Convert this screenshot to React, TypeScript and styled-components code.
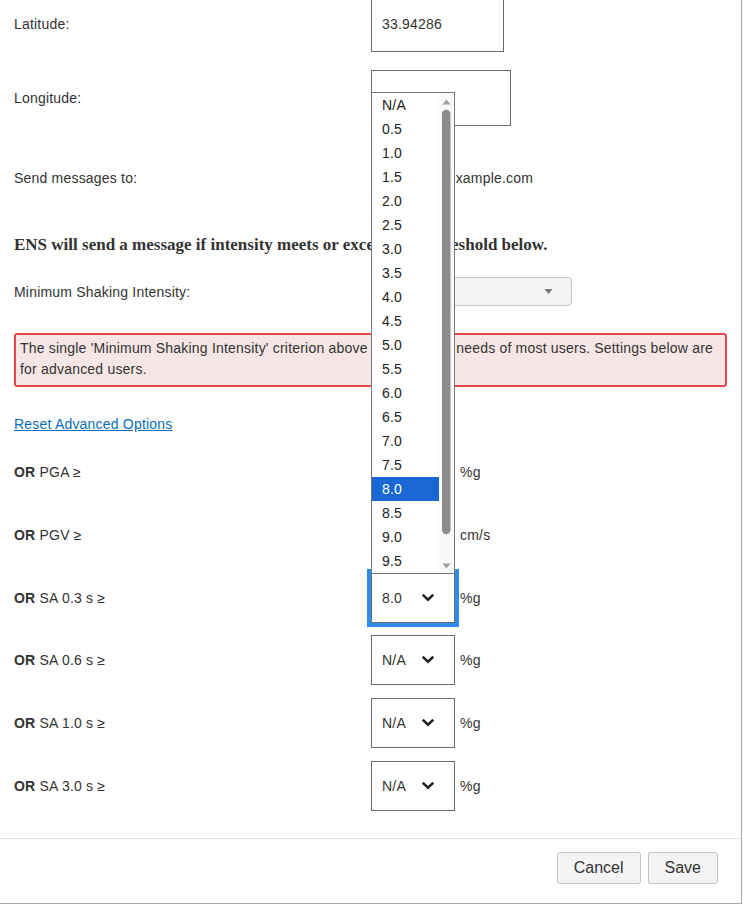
import React from "react";
import styled, { createGlobalStyle, css } from "styled-components";

const GlobalStyle = createGlobalStyle`
  html, body {
    margin: 0;
    padding: 0;
    background: #fff;
    overflow: hidden;
  }
  body {
    font-family: "Liberation Sans", Arial, sans-serif;
    font-size: 14px;
    letter-spacing: 0.2px;
    color: #333;
  }
`;

const Modal = styled.div`
  box-sizing: border-box;
  width: 742px;
  margin-top: -4px;
  background: #fff;
  border-right: 1px solid #a8a8a8;
  border-bottom: 1px solid #a8a8a8;
`;

const Body = styled.div`
  padding: 0 14px;
`;

const Row = styled.div<{ $top?: number; $height?: number }>`
  display: flex;
  align-items: center;
  min-height: ${(p) => p.$height ?? 20}px;
  margin-top: ${(p) => p.$top ?? 0}px;
  line-height: 20px;
`;

const Label = styled.div`
  width: 357px;
  flex-shrink: 0;
`;

const TextField = styled.div<{ $width: number }>`
  box-sizing: border-box;
  width: ${(p) => p.$width}px;
  height: 56px;
  border: 1px solid #6b6b6b;
  padding: 0 10px;
  display: flex;
  align-items: center;
`;

const PlainValue = styled.div`
  padding-left: 11px;
`;

const Heading = styled.h4`
  margin: 29px 0 0;
  font-family: "Liberation Serif", "Times New Roman", serif;
  font-size: 17px;
  font-weight: bold;
  letter-spacing: 0;
  line-height: 20px;
  color: #333;
`;

const ChosenSelect = styled.div`
  box-sizing: border-box;
  width: 201px;
  height: 29px;
  border: 1px solid #c6c6c6;
  border-radius: 4px;
  background: #f4f4f4;
  display: flex;
  align-items: center;
  justify-content: flex-end;
  padding-right: 18px;
`;

const Alert = styled.div`
  margin-top: 27px;
  border: 2px solid #e8474a;
  border-radius: 3px;
  background: #f7e6e6;
  padding: 3px 4px 5px;
  line-height: 21px;
`;

const ResetLink = styled.a`
  display: block;
  margin-top: 27px;
  line-height: 20px;
  color: #0a6ebd;
  text-decoration: underline;
  width: max-content;
`;

const Thresholds = styled.div`
  margin-top: 13px;
  display: flex;
  flex-direction: column;
  gap: 12.75px;
`;

const ThresholdRow = styled.div`
  display: flex;
  align-items: center;
  height: 50px;
  line-height: 20px;
`;

const SelectBox = styled.div<{ $focused?: boolean }>`
  position: relative;
  box-sizing: border-box;
  width: 84px;
  height: 50px;
  border: 1px solid #6b6b6b;
  display: flex;
  align-items: center;
  padding-left: 10px;
  ${(p) =>
    p.$focused &&
    css`
      outline: 4px solid #2d8cf0;
    `}
`;

const SelectValue = styled.span`
  width: 40px;
`;

const Unit = styled.span`
  margin-left: 5px;
`;

const OptionList = styled.div`
  position: absolute;
  left: -1px;
  bottom: 100%;
  box-sizing: border-box;
  width: 84px;
  border: 1px solid #767676;
  background: #fff;
  display: flex;
  z-index: 2;
`;

const Options = styled.div`
  flex: 1;
`;

const Option = styled.div<{ $selected?: boolean }>`
  height: 24px;
  line-height: 24px;
  padding-left: 10px;
  color: #222;
  ${(p) =>
    p.$selected &&
    css`
      background: #1967d2;
      color: #fff;
    `}
`;

const Footer = styled.div`
  margin-top: 27.25px;
  border-top: 1px solid #e3e3e3;
  display: flex;
  justify-content: flex-end;
  gap: 7px;
  padding: 13px 23px 19px 0;
`;

const Button = styled.button`
  box-sizing: border-box;
  height: 32px;
  padding: 0 16px;
  border: 1px solid #c4c4c4;
  border-radius: 3px;
  background: #f4f4f4;
  font-family: "Liberation Sans", Arial, sans-serif;
  font-size: 16px;
  color: #333;
`;

const Chevron = () => (
  <svg width="12" height="8" viewBox="0 0 12 8">
    <polyline
      points="1.6,1.6 6,5.8 10.4,1.6"
      fill="none"
      stroke="#222"
      strokeWidth="2.6"
      strokeLinecap="square"
    />
  </svg>
);

const Caret = () => (
  <svg width="9" height="5" viewBox="0 0 9 5">
    <polygon points="0.5,0 8.5,0 4.5,5" fill="#777" />
  </svg>
);

const ScrollTrack = () => (
  <svg width="15" height="480" viewBox="0 0 15 480">
    <rect x="0" y="0" width="15" height="480" fill="#f9f9f9" />
    <polygon points="3.5,11.5 7.5,6.5 11.5,11.5" fill="#a0a0a0" />
    <rect x="3" y="16.8" width="8.5" height="424.4" rx="4.2" fill="#8c8c8c" />
    <polygon points="3.5,470.5 11.5,470.5 7.5,475.5" fill="#a0a0a0" />
  </svg>
);

const VALUES = [
  "N/A", "0.5", "1.0", "1.5", "2.0", "2.5", "3.0", "3.5", "4.0", "4.5",
  "5.0", "5.5", "6.0", "6.5", "7.0", "7.5", "8.0", "8.5", "9.0", "9.5",
];

type Threshold = { name: string; unit: string; value: string; open?: boolean };

const THRESHOLDS: Threshold[] = [
  { name: "PGA", unit: "%g", value: "N/A" },
  { name: "PGV", unit: "cm/s", value: "N/A" },
  { name: "SA 0.3 s", unit: "%g", value: "8.0", open: true },
  { name: "SA 0.6 s", unit: "%g", value: "N/A" },
  { name: "SA 1.0 s", unit: "%g", value: "N/A" },
  { name: "SA 3.0 s", unit: "%g", value: "N/A" },
];

export default function App() {
  return (
    <>
      <GlobalStyle />
      <Modal>
        <Body>
          <Row $height={56}>
            <Label>Latitude:</Label>
            <TextField $width={133}>33.94286</TextField>
          </Row>
          <Row $top={18} $height={56}>
            <Label>Longitude:</Label>
            <TextField $width={140} />
          </Row>
          <Row $top={24} $height={56}>
            <Label>Send messages to:</Label>
            <PlainValue>johndoe@example.com</PlainValue>
          </Row>
          <Heading>
            ENS will send a message if intensity meets or exceeds the threshold
            below.
          </Heading>
          <Row $top={22} $height={29}>
            <Label>Minimum Shaking Intensity:</Label>
            <ChosenSelect>
              <Caret />
            </ChosenSelect>
          </Row>
          <Alert>
            The single 'Minimum Shaking Intensity' criterion above will meet the
            needs of most users. Settings below are for advanced users.
          </Alert>
          <ResetLink href="#">Reset Advanced Options</ResetLink>
          <Thresholds>
            {THRESHOLDS.map((t) => (
              <ThresholdRow key={t.name}>
                <Label>
                  <b>OR</b> {t.name} ≥
                </Label>
                <SelectBox $focused={t.open}>
                  <SelectValue>{t.value}</SelectValue>
                  <Chevron />
                  {t.open && (
                    <OptionList>
                      <Options>
                        {VALUES.map((v) => (
                          <Option key={v} $selected={v === t.value}>
                            {v}
                          </Option>
                        ))}
                      </Options>
                      <ScrollTrack />
                    </OptionList>
                  )}
                </SelectBox>
                <Unit>{t.unit}</Unit>
              </ThresholdRow>
            ))}
          </Thresholds>
        </Body>
        <Footer>
          <Button>Cancel</Button>
          <Button>Save</Button>
        </Footer>
      </Modal>
    </>
  );
}
